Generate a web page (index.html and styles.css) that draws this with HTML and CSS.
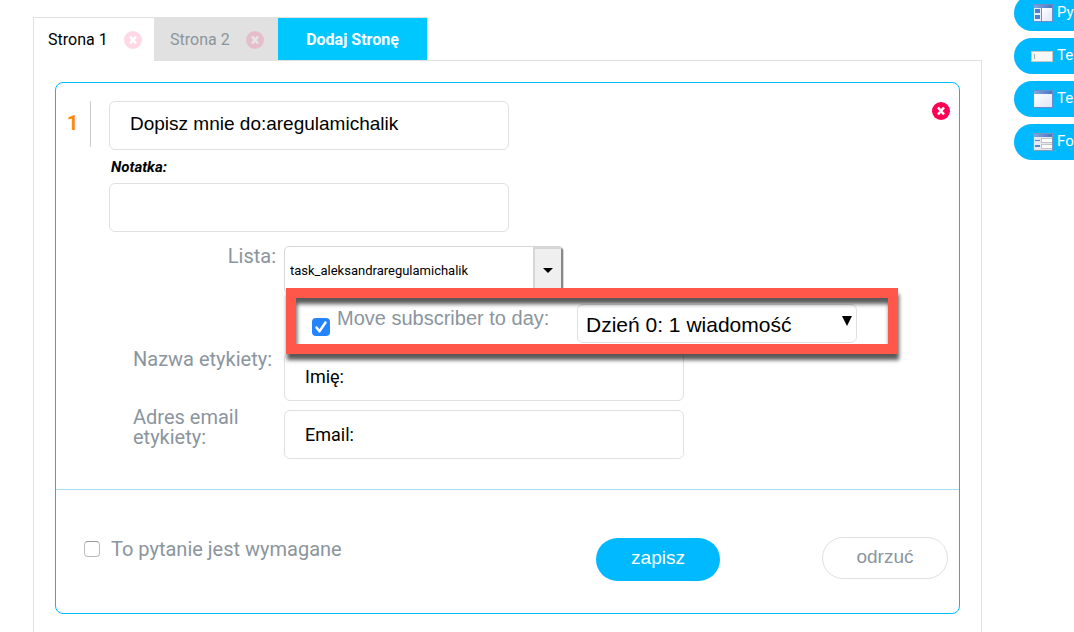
FILE: index.html
```html
<!DOCTYPE html>
<html lang="pl">
<head>
<meta charset="utf-8">
<meta name="viewport" content="width=device-width, initial-scale=1">
<title>Edytor ankiety</title>
<link rel="stylesheet" href="styles.css">
</head>
<body>
<svg class="sprite" aria-hidden="true">
  <defs>
    <linearGradient id="bar" x1="0" y1="0" x2="1" y2="0"><stop offset="0" stop-color="#7fa6e0"/><stop offset="1" stop-color="#4a77c4"/></linearGradient>
    <linearGradient id="pane" x1="0" y1="0" x2="1" y2="1"><stop offset="0" stop-color="#ffffff"/><stop offset="1" stop-color="#dfe6f5"/></linearGradient>
    <symbol id="close" viewBox="0 0 18 18">
      <circle cx="9" cy="9" r="9" fill="#ff0055"/>
      <path d="M6 5.5l6 7M12 5.5l-6 7" stroke="#fff" stroke-width="2.6"/>
    </symbol>
  </defs>
</svg>
<div class="page">
  <main class="editor">
    <nav class="tabs">
      <div class="tab tab-active">
        <a class="tab-link" href="#strona1">Strona 1</a>
        <button class="close close-faded" type="button" aria-label="Usuń stronę 1"><svg><use href="#close"/></svg></button>
      </div>
      <div class="tab tab-idle">
        <a class="tab-link" href="#strona2">Strona 2</a>
        <button class="close close-faded" type="button" aria-label="Usuń stronę 2"><svg><use href="#close"/></svg></button>
      </div>
      <button class="tab-add" type="button">Dodaj Stronę</button>
    </nav>
    <section class="panel">
      <form class="card">
        <div class="question">
          <div class="number">1</div>
          <div class="fields">
            <input class="box box-title" type="text" aria-label="Pytanie" value="Dopisz mnie do:aregulamichalik">
            <label class="note-label" for="note">Notatka:</label>
            <input class="box" id="note" type="text">
            <div class="rows">
              <label class="label label-end" for="list">Lista:</label>
              <div class="combo">
                <select id="list"><option>task_aleksandraregulamichalik</option></select>
                <span class="combo-arrow"><svg viewBox="0 0 10 5"><path d="M0 0h10L5 5z"/></svg></span>
              </div>
              <div class="move">
                <div class="check">
                  <input class="tick tick-on" id="move" type="checkbox" checked>
                  <svg class="check-mark" viewBox="0 0 18 18"><path d="M4.5 9.5l3 3.7 6-8.7" fill="none" stroke="#fff" stroke-width="2.4" stroke-linecap="round" stroke-linejoin="round"/></svg>
                </div>
                <label class="move-label" for="move">Move subscriber to day:</label>
                <div class="day">
                  <select aria-label="Dzień"><option>Dzień 0: 1 wiadomość</option></select>
                  <svg class="day-arrow" viewBox="0 0 10 10"><path d="M0 0h10L5 10z"/></svg>
                </div>
              </div>
              <label class="label label-raised" for="name">Nazwa etykiety:</label>
              <input class="box" id="name" type="text" value="Imię:">
              <label class="label label-raised" for="email">Adres email etykiety:</label>
              <input class="box" id="email" type="text" value="Email:">
            </div>
          </div>
          <button class="close" type="button" aria-label="Usuń pytanie"><svg><use href="#close"/></svg></button>
        </div>
        <footer class="actions">
          <label class="required"><input class="tick" type="checkbox">To pytanie jest wymagane</label>
          <button class="button button-save" type="submit">zapisz</button>
          <button class="button button-discard" type="button">odrzuć</button>
        </footer>
      </form>
    </section>
  </main>
  <aside class="tools">
    <button class="tool" type="button">
      <svg viewBox="0 0 20 18"><path fill="#6b8dc9" d="M0 0h20v18H0z"/><path fill="url(#bar)" d="M1 1h18v3H1z"/><path fill="#e8eefa" d="M1 4h7v13H1z"/><path fill="url(#pane)" d="M9 4h10v13H9z"/><path fill="#4c7fd0" d="M2 5h5v4H2zM2 11h5v4H2z"/></svg>Pytanie
    </button>
    <button class="tool" type="button">
      <svg viewBox="0 0 20 18"><path fill="#c9c9c3" d="M-2 4h22v11H-2z"/><path fill="#f8f8f6" d="M-1 5h20v9H-1z"/><path fill="#aaa" d="M1 7h1v5H1z"/></svg>Tekst
    </button>
    <button class="tool" type="button">
      <svg viewBox="0 0 20 18"><path fill="#6b8dc9" d="M0 0h20v18H0z"/><path fill="url(#bar)" d="M1 1h18v3H1z"/><path fill="url(#pane)" d="M1 4h18v13H1z"/></svg>Tekst
    </button>
    <button class="tool" type="button">
      <svg viewBox="0 0 20 18"><path fill="#7f96bd" d="M0 0h20v18H0z"/><path fill="url(#bar)" d="M1 1h18v3H1z"/><path fill="#e6e8ee" d="M1 4h18v13H1z"/><path fill="#5585cf" d="M2 7h5v1H2zM2 12h5v2H2z"/><path fill="#c4c4c4" d="M8 5h11v5H8zM8 11h11v5H8z"/><path fill="#fff" d="M9 6h10v3H9zM9 12h10v3H9z"/></svg>Formularz
    </button>
  </aside>
</div>
</body>
</html>
```
FILE: styles.css
```css
* { box-sizing: border-box; }

body {
  margin: 0;
  background: #fff;
  color: #000;
  font-family: Roboto, sans-serif;
  overflow: hidden;
}

button, input, select { font: inherit; color: inherit; margin: 0; }
button { cursor: pointer; border: 0; padding: 0; }
.sprite { position: absolute; width: 0; height: 0; }

.page { display: flex; gap: 32px; padding-left: 33px; min-height: 100vh; }
.editor { flex: 1; min-width: 0; display: flex; flex-direction: column; padding-top: 17px; }

.tabs { display: flex; align-self: flex-start; border-top: 1px solid #e0e0e0; border-right: 1px solid #e0e0e0; font-size: 16px; }
.tab { display: flex; align-items: center; height: 43px; }
.tab-active { position: relative; justify-content: space-between; width: 121px; padding: 0 12px 0 14px; margin-bottom: -1px; background: #fff; border-left: 1px solid #e0e0e0; }
.tab-idle { position: relative; justify-content: space-between; width: 124px; padding: 0 14px 0 16px; margin-bottom: -1px; background: #e1e1e1; color: #8b959e; }
.tab-link { color: inherit; text-decoration: none; }
.tab-add { width: 149px; background: #00c8ff; color: #fff; font-weight: 700; }

.close { flex: none; width: 18px; height: 18px; background: none; border-radius: 50%; }
.close svg { display: block; width: 18px; height: 18px; }
.close-faded { opacity: 0.15; }

.panel { flex: 1; padding: 21px; padding-bottom: 32px; border: 1px solid #e0e0e0; border-bottom: 0; }
.card { border: 1px solid #00b9ff; border-radius: 8px; }

.question { display: flex; align-items: flex-start; padding: 18px 9px 30px 0; }
.number { width: 35px; height: 46px; margin-right: 18px; padding-left: 11px; border-right: 1px solid #ccc; color: #ff8a00; font-size: 20px; font-weight: 700; line-height: 44px; }
.fields { flex: 1; min-width: 0; display: flex; flex-direction: column; }
.fields + .close { margin-top: 1px; }

.box { width: 400px; max-width: 100%; height: 49px; padding: 0 20px; border: 1px solid #e0e0e0; border-radius: 6px; background: #fff; font-size: 18px; outline: 0; }
.box-title { font-family: "Liberation Sans", sans-serif; font-size: 19px; padding-bottom: 4px; }
.note-label { margin: 9px 0 8px 2px; font-size: 15px; line-height: 16px; font-weight: 700; font-style: italic; }

.rows { display: grid; grid-template-columns: 143px minmax(0, 1fr); column-gap: 8px; align-items: start; padding: 14px 0 0 24px; }
.rows .box { margin-bottom: 9px; }
.rows .box:last-child { margin-bottom: 0; }
.label { color: #8b959e; font-size: 20px; line-height: 20px; }
.label-raised { margin-top: -3px; }
.label-end { text-align: right; }

.combo { display: flex; width: 280px; height: 48px; border: 1px solid #d6d6d6; border-radius: 5px; overflow: hidden; }
.combo select { flex: 1; min-width: 0; padding: 0 5px; border: 0; background: none; appearance: none; font-size: 13px; }
.combo-arrow { display: grid; place-items: center; width: 30px; background: #efefef; border: 2px solid #d6d6d6; border-right-color: #8a8a8a; }
.combo-arrow svg { width: 10px; height: 5px; }

.move { grid-column: 2; position: relative; display: flex; align-items: flex-start; width: 592px; height: 46px; margin: 4px 0 8px 12px; padding: 6px 31px 0 16px; }
.move::after { content: ""; position: absolute; inset: -10px; border: 10px solid #ff584a; box-shadow: 1px 6px 4px rgba(0, 0, 0, 0.65), inset 1px 6px 4px rgba(0, 0, 0, 0.65); pointer-events: none; }
.move-label { flex: 1; padding: 3px 0 0 7px; color: #8b959e; font-family: "Liberation Sans", sans-serif; font-size: 20px; line-height: 22px; }
.day { position: relative; width: 280px; }
.day select { width: 100%; height: 39px; padding: 1px 32px 0 8px; border: 1px solid #e0e0e0; border-radius: 6px; background: #fff; appearance: none; font-family: "Liberation Sans", sans-serif; font-size: 21px; }
.day-arrow { position: absolute; top: 12px; right: 5px; width: 10px; height: 10px; pointer-events: none; }

.tick { appearance: none; display: block; flex: none; width: 16px; height: 16px; border: 1px solid #bbb; border-top-color: #999; border-radius: 4px; background: #fff; }
.tick-on { width: 18px; height: 18px; border: 0; background: #2384fe; }
.check { position: relative; flex: none; margin-top: 14px; }
.check-mark { position: absolute; inset: 0; width: 18px; height: 18px; pointer-events: none; }

.actions { display: flex; align-items: flex-start; padding: 47px 11px 32px 28px; border-top: 1px solid #a8dcf2; }
.required { flex: 1; display: flex; align-items: center; gap: 11px; height: 24px; color: #8b959e; font-size: 20px; }
.button { border-radius: 22px; font-family: "Liberation Sans", sans-serif; font-size: 19px; }
.button-save { width: 124px; height: 43px; margin: 1px 102px 0 0; padding-bottom: 3px; background: #00b9ff; color: #fff; }
.button-discard { width: 126px; height: 42px; padding-bottom: 3px; background: #fff; border: 1px solid #e0e0e0; color: #8b959e; }

.tools { flex: none; width: 60px; display: flex; flex-direction: column; gap: 7px; margin-top: -5px; overflow: hidden; }
.tool { display: flex; align-items: center; gap: 4px; width: 180px; height: 36px; padding: 0 0 2px 19px; border-radius: 18px; background: #00b9ff; color: #fff; font-size: 15px; }
.tool svg { flex: none; width: 20px; height: 18px; margin-top: 2px; overflow: visible; }
```
